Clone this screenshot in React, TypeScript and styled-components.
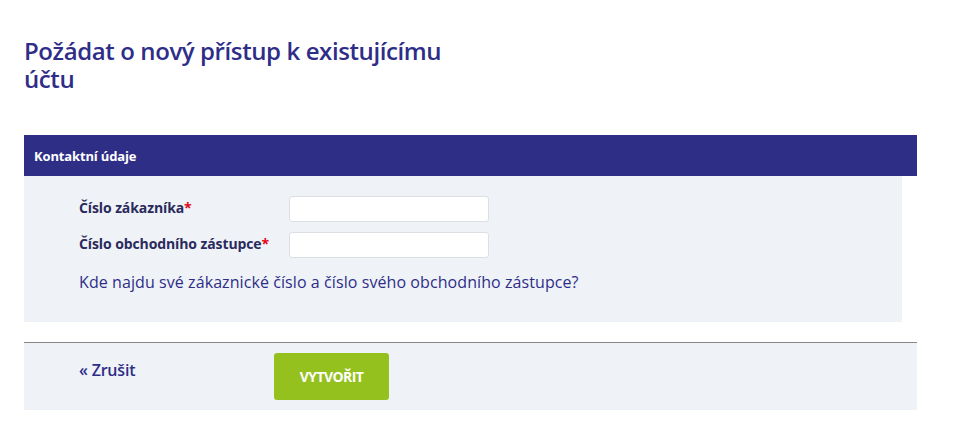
import React from 'react';
import styled, { createGlobalStyle } from 'styled-components';

const GlobalStyle = createGlobalStyle`
  html, body {
    margin: 0;
    padding: 0;
    background: #ffffff;
    font-family: 'Open Sans', 'Liberation Sans', sans-serif;
  }
`;

const Page = styled.div`
  padding: 37px 42px 0 24px;
  width: 959px;
  box-sizing: border-box;
`;

const Title = styled.h1`
  margin: 0;
  max-width: 440px;
  font-size: 24px;
  line-height: 28px;
  font-weight: 600;
  color: #2e2d87;
  letter-spacing: -0.4px;
`;

const SectionHeader = styled.div`
  margin-top: 42px;
  height: 41px;
  background: #2e2e87;
  color: #ffffff;
  font-size: 13px;
  font-weight: 700;
  letter-spacing: -0.15px;
  display: flex;
  align-items: center;
  padding-left: 10px;
`;

const FormPanel = styled.div`
  margin-right: 15px;
  background: #eff3f8;
  padding: 20px 55px 29px;
  display: flex;
  flex-direction: column;
  gap: 10px;
`;

const FieldRow = styled.div`
  display: flex;
  align-items: center;
`;

const Label = styled.label`
  width: 210px;
  padding-bottom: 4px;
  font-size: 14px;
  font-weight: 700;
  color: #2b2a5c;
  letter-spacing: -0.1px;
`;

const Required = styled.span`
  color: #e30613;
`;

const Input = styled.input`
  width: 200px;
  height: 26px;
  box-sizing: border-box;
  border: 1px solid #dcdfe3;
  border-radius: 3px;
  background: #ffffff;
  outline: none;
`;

const HelpLink = styled.a`
  margin-top: 3px;
  font-size: 16px;
  color: #2e2d87;
  letter-spacing: 0.08px;
  text-decoration: none;
  cursor: pointer;
`;

const Footer = styled.div`
  margin-top: 20px;
  border-top: 1px solid #888888;
  background: #eff3f8;
  height: 68px;
  padding: 10px 0 0 55px;
  box-sizing: border-box;
  display: flex;
  align-items: flex-start;
`;

const CancelLink = styled.a`
  width: 195px;
  margin-top: 6px;
  font-size: 16px;
  font-weight: 600;
  color: #2e2d87;
  letter-spacing: -0.2px;
  cursor: pointer;
`;

const SubmitButton = styled.button`
  width: 115px;
  height: 47px;
  border: none;
  border-radius: 3px;
  background: #95c11f;
  color: #ffffff;
  font-family: inherit;
  font-size: 14px;
  font-weight: 700;
  letter-spacing: -0.6px;
  cursor: pointer;
`;

export default function App() {
  return (
    <>
      <GlobalStyle />
      <Page>
        <Title>Požádat o nový přístup k existujícímu účtu</Title>
        <SectionHeader>Kontaktní údaje</SectionHeader>
        <FormPanel>
          <FieldRow>
            <Label>
              Číslo zákazníka<Required>*</Required>
            </Label>
            <Input type="text" />
          </FieldRow>
          <FieldRow>
            <Label>
              Číslo obchodního zástupce<Required>*</Required>
            </Label>
            <Input type="text" />
          </FieldRow>
          <HelpLink>Kde najdu své zákaznické číslo a číslo svého obchodního zástupce?</HelpLink>
        </FormPanel>
        <Footer>
          <CancelLink>« Zrušit</CancelLink>
          <SubmitButton>VYTVOŘIT</SubmitButton>
        </Footer>
      </Page>
    </>
  );
}
